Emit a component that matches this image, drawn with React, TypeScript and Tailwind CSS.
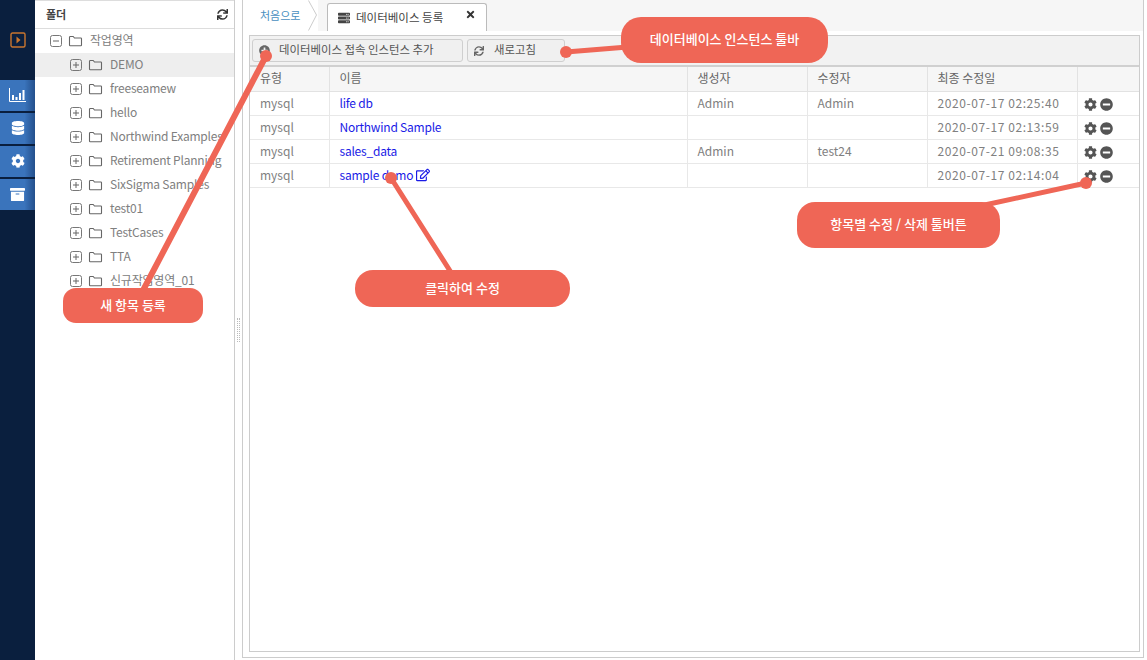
import React from "react";
import { FaPlusCircle, FaSync, FaCog, FaMinusCircle, FaRegEdit, FaDatabase, FaArchive, FaTimes, FaServer } from "react-icons/fa";

const font = { fontFamily: '"Noto Sans CJK KR", "Noto Sans", sans-serif' };

function BoxSign({ plus }: { plus?: boolean }) {
  return (
    <svg width="12" height="12" viewBox="0 0 12 12" className="shrink-0">
      <rect x="0.5" y="0.5" width="11" height="11" rx="2" fill="none" stroke="#777" />
      <path d={plus ? "M3 6H9M6 3V9" : "M3 6H9"} stroke="#666" strokeWidth="1" />
    </svg>
  );
}

function FolderIcon() {
  return (
    <svg width="15" height="12" viewBox="0 0 15 12" className="shrink-0">
      <path d="M1.5 10V2.2C1.5 1.7 1.9 1.5 2.3 1.5H5.2L6.5 3H12.8C13.2 3 13.5 3.3 13.5 3.7V10C13.5 10.4 13.2 10.7 12.8 10.7H2.2C1.8 10.7 1.5 10.4 1.5 10Z" fill="none" stroke="#666" strokeWidth="1.1" />
    </svg>
  );
}

function TreeRow({ label, depth, open, active }: { label: string; depth: number; open?: boolean; active?: boolean }) {
  return (
    <div className={`flex h-6 items-center ${active ? "bg-[#eeeeee]" : ""} ${depth === 0 ? "pl-[15px]" : "pl-[35px]"}`}>
      <BoxSign plus={!open} />
      <span className="ml-[6px]"><FolderIcon /></span>
      <span className="ml-[7px] whitespace-nowrap pb-[2px] text-[12px] tracking-[-0.2px] text-[#808080]">{label}</span>
    </div>
  );
}

function SideButton({ children }: { children: React.ReactNode }) {
  return (
    <div className="flex h-[31px] w-[35px] items-center justify-center bg-gradient-to-r from-[#3a74bc] from-[70%] to-[#24508c] text-white">
      {children}
    </div>
  );
}

const rows = [
  ["mysql", "life db", "Admin", "Admin", "2020-07-17 02:25:40"],
  ["mysql", "Northwind Sample", "", "", "2020-07-17 02:13:59"],
  ["mysql", "sales_data", "Admin", "test24", "2020-07-21 09:08:35"],
  ["mysql", "sample demo", "", "", "2020-07-17 02:14:04"],
];

const folders = ["DEMO", "freeseamew", "hello", "Northwind Examples", "Retirement Planning", "SixSigma Samples", "test01", "TestCases", "TTA", "신규작업영역_01"];

function Callout({ className, children }: { className: string; children: React.ReactNode }) {
  return (
    <div className={`absolute flex items-center justify-center bg-[#ef6656] pb-[2px] text-[13px] font-medium text-white ${className}`}>
      {children}
    </div>
  );
}

export default function App() {
  return (
    <div className="relative flex h-[660px] w-[1147px] overflow-hidden bg-white" style={font}>
      <aside className="flex w-[35px] shrink-0 flex-col bg-[#0a1f3e]">
        <div className="flex h-[80px] items-center justify-center">
          <svg width="16" height="16" viewBox="0 0 16 16">
            <rect x="1" y="1" width="14" height="14" rx="1.5" fill="none" stroke="#c9762f" strokeWidth="1.4" />
            <path d="M6.5 4.5L10.5 8L6.5 11.5Z" fill="#c9762f" />
          </svg>
        </div>
        <div className="flex flex-col gap-[2px]">
          <SideButton>
            <svg width="17" height="14" viewBox="0 0 17 14" className="mb-[2px]">
              <path d="M0.5 0V13.5H17" fill="none" stroke="white" strokeWidth="1" />
              <path d="M3 7H5V12H3ZM6.5 9H8.5V12H6.5ZM10 5H12V12H10ZM13.5 2H15.5V12H13.5Z" fill="white" />
            </svg>
          </SideButton>
          <SideButton><FaDatabase size={14} className="mb-[2px]" /></SideButton>
          <SideButton><FaCog size={14} className="mb-[2px]" /></SideButton>
          <SideButton><FaArchive size={15} /></SideButton>
        </div>
      </aside>

      <section className="flex w-[200px] shrink-0 flex-col overflow-hidden border-r border-[#cccccc]">
        <div className="flex h-[29px] shrink-0 items-center justify-between border-b border-t border-[#dddddd] pl-[11px] pr-[6px]">
          <span className="text-[11px] font-semibold text-[#444444]">폴더</span>
          <FaSync size={11} className="text-[#333333]" />
        </div>
        <TreeRow label="작업영역" depth={0} open />
        {folders.map((f, i) => (
          <TreeRow key={f} label={f} depth={1} active={i === 0} />
        ))}
      </section>

      <div className="relative w-[7px] shrink-0">
        <div className="absolute left-[2px] top-[318px] h-[24px] w-[3px] border-x border-dotted border-[#bbbbbb]" />
      </div>

      <main className="mb-[2px] mr-[3px] flex flex-1 flex-col border border-[#cccccc] border-t-0 pb-[5px]">
        <div className="flex h-[31px] shrink-0 bg-[#f6f6f6]">
          <div className="relative flex h-[31px] w-[75px] items-center bg-white pl-[17px] text-[11px] text-[#4a8fc0]">
            처음으로
            <svg width="10" height="31" viewBox="0 0 10 31" className="absolute right-0 top-0">
              <path d="M0.5 0.5L8.5 15L0.5 30.5" fill="none" stroke="#cccccc" />
            </svg>
          </div>
          <div className="ml-[9px] mt-[3px] flex h-[28px] w-[160px] items-center rounded-t-[3px] border border-b-0 border-[#bbbbbb] bg-white pl-[10px]">
            <FaServer size={12} className="text-[#444444]" />
            <span className="ml-[6px] text-[11.5px] text-[#444444]">데이터베이스 등록</span>
            <FaTimes size={11} className="mb-[7px] ml-[22px] text-[#333333]" />
          </div>
        </div>
        <div className="ml-[6px] mr-[3px] mt-[4px] flex flex-1 flex-col border border-[#cccccc]">
          <div className="flex h-[31px] shrink-0 items-center gap-[4px] border-b-2 border-[#d0d0d0] bg-[#f2f2f2] pl-[2px]">
            <button className="flex h-[23px] w-[211px] items-center rounded-[3px] border border-[#cfcfcf] bg-[#f0f0f0] pl-[6px] text-[11.4px] text-[#555555]">
              <FaPlusCircle size={11} className="text-[#666666]" />
              <span className="ml-[9px] pb-[2px]">데이터베이스 접속 인스턴스 추가</span>
            </button>
            <button className="flex h-[23px] w-[98px] items-center rounded-[3px] border border-[#cfcfcf] bg-[#f0f0f0] pl-[6px] text-[11.4px] text-[#555555]">
              <FaSync size={10} className="text-[#666666]" />
              <span className="ml-[10px] pb-[2px]">새로고침</span>
            </button>
          </div>
          <table className="w-full table-fixed border-collapse text-[12px] text-[#808080]">
            <colgroup>
              <col className="w-[79px]" />
              <col className="w-[358px]" />
              <col className="w-[120px]" />
              <col className="w-[120px]" />
              <col className="w-[150px]" />
              <col />
            </colgroup>
            <thead>
              <tr className="h-[24px] border-b border-[#e2e2e2] bg-[#f6f6f6]">
                {["유형", "이름", "생성자", "수정자", "최종 수정일", ""].map((h, i) => (
                  <th key={i} className="border-r border-[#e2e2e2] pb-[2px] pl-[10px] text-left text-[12px] font-normal text-[#666666] last:border-r-0">{h}</th>
                ))}
              </tr>
            </thead>
            <tbody>
              {rows.map((r) => (
                <tr key={r[1]} className="h-[24px] border-b border-[#e8e8e8]">
                  <td className="border-r border-[#e8e8e8] pl-[10px]">{r[0]}</td>
                  <td className="border-r border-[#e8e8e8] pl-[10px] tracking-[-0.22px] text-[#1a1ae6]">
                    <span className="inline-flex items-center gap-[3px]">
                      {r[1]}
                      {r[1] === "sample demo" && <FaRegEdit size={14} />}
                    </span>
                  </td>
                  <td className="border-r border-[#e8e8e8] pl-[10px]">{r[2]}</td>
                  <td className="border-r border-[#e8e8e8] pl-[10px]">{r[3]}</td>
                  <td className="border-r border-[#e8e8e8] pl-[10px] tracking-[0.58px]">{r[4]}</td>
                  <td className="pl-[6px] pt-[2px]">
                    <span className="flex items-center gap-[3px] text-[#555555]">
                      <FaCog size={13} />
                      <FaMinusCircle size={13} />
                    </span>
                  </td>
                </tr>
              ))}
            </tbody>
          </table>
        </div>
      </main>

      <svg width="1147" height="660" className="pointer-events-none absolute left-0 top-0">
        <g stroke="#ef6656" fill="#ef6656" strokeLinecap="round">
          <line x1="266" y1="56" x2="138" y2="300" strokeWidth="6" />
          <circle cx="266" cy="56" r="6" stroke="none" />
          <line x1="566" y1="52" x2="640" y2="46" strokeWidth="5" />
          <circle cx="566" cy="52" r="6" stroke="none" />
          <line x1="391" y1="178" x2="452" y2="274" strokeWidth="5" />
          <circle cx="391" cy="178" r="6" stroke="none" />
          <line x1="1086" y1="183" x2="980" y2="206" strokeWidth="5" />
          <circle cx="1086" cy="183" r="6" stroke="none" />
        </g>
      </svg>
      <Callout className="left-[63px] top-[288px] h-[35px] w-[140px] rounded-[13px]">새 항목 등록</Callout>
      <Callout className="left-[355px] top-[270px] h-[37px] w-[215px] rounded-[18px]">클릭하여 수정</Callout>
      <Callout className="left-[621px] top-[17px] h-[46px] w-[207px] rounded-[20px]">데이터베이스 인스턴스 툴바</Callout>
      <Callout className="left-[797px] top-[202px] h-[46px] w-[203px] rounded-[18px]">항목별 수정 / 삭제 툴버튼</Callout>
    </div>
  );
}
